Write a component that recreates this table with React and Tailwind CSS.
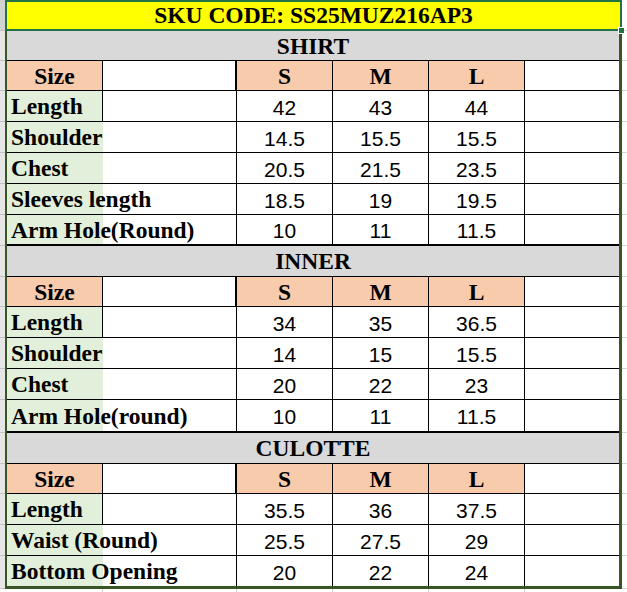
import React from "react";

const serif = "font-[family-name:Liberation_Serif,Times_New_Roman,serif] font-bold text-[23.5px] leading-none text-black";
const sans = "font-[family-name:Liberation_Sans,Arial,sans-serif] text-[21px] leading-none text-black";

const sections = [
  {
    title: "SHIRT",
    titleH: "h-[30px]",
    rows: [
      { label: "Length", vals: ["42", "43", "44"], line: true },
      { label: "Shoulder", vals: ["14.5", "15.5", "15.5"] },
      { label: "Chest", vals: ["20.5", "21.5", "23.5"] },
      { label: "Sleeves length", vals: ["18.5", "19", "19.5"] },
      { label: "Arm Hole(Round)", vals: ["10", "11", "11.5"], last: true },
    ],
  },
  {
    title: "INNER",
    titleH: "h-[31px]",
    rows: [
      { label: "Length", vals: ["34", "35", "36.5"], line: true },
      { label: "Shoulder", vals: ["14", "15", "15.5"] },
      { label: "Chest", vals: ["20", "22", "23"] },
      { label: "Arm Hole(round)", vals: ["10", "11", "11.5"], last: true, tall: true },
    ],
  },
  {
    title: "CULOTTE",
    titleH: "h-[31px]",
    rows: [
      { label: "Length", vals: ["35.5", "36", "37.5"], line: true },
      { label: "Waist (Round)", vals: ["25.5", "27.5", "29"] },
      { label: "Bottom Opening", vals: ["20", "22", "24"], end: true },
    ],
  },
];

// heights of every sheet row, for the row header strips at the sides
const stripRows = [
  "h-[31px]", "h-[30px]", "h-[30px]", "h-[31px]", "h-[31px]", "h-[31px]", "h-[31px]", "h-[31px]",
  "h-[31px]", "h-[30px]", "h-[31px]", "h-[31px]", "h-[31px]", "h-[33px]",
  "h-[31px]", "h-[30px]", "h-[31px]", "h-[31px]", "h-[33px]",
];

const SizeRow = () => (
  <div className="flex h-[30px] border-b border-black">
    <div className={`w-[96px] shrink-0 bg-[#f8cbad] border-r border-black flex items-center justify-center pt-[2px] ${serif}`}>
      Size
    </div>
    <div className="w-[134px] shrink-0 bg-white border-r-2 border-black" />
    {["S", "M", "L"].map((s) => (
      <div
        key={s}
        className={`w-[96px] shrink-0 bg-[#f8cbad] border-r border-black flex items-center justify-center pt-[2px] ${serif}`}
      >
        {s}
      </div>
    ))}
    <div className="w-[94px] shrink-0 bg-white" />
  </div>
);

const DataRow = ({ row }) => {
  let rowCls = "flex h-[31px] border-b border-black";
  if (row.last && row.tall) rowCls = "flex h-[33px] border-b-2 border-black";
  else if (row.last) rowCls = "flex h-[31px] border-b-2 border-black";
  else if (row.end) rowCls = "flex h-[30px]";
  return (
    <div className={rowCls}>
      <div
        className={`w-[96px] shrink-0 bg-[#e2efda] pl-[4px] pt-[2px] flex items-center whitespace-nowrap relative z-10 ${
          row.line ? "border-r border-black" : ""
        } ${serif}`}
      >
        {row.label}
      </div>
      <div className="w-[134px] shrink-0 bg-white border-r border-black" />
      {row.vals.map((v, i) => (
        <div
          key={i}
          className={`w-[96px] shrink-0 bg-white border-r border-black flex items-center justify-center pt-[2px] ${sans}`}
        >
          {v}
        </div>
      ))}
      <div className="w-[94px] shrink-0 bg-white" />
    </div>
  );
};

export default function App() {
  return (
    <div className="w-[627px] h-[592px] bg-white overflow-hidden flex">
      <div className="w-[5px] shrink-0 flex flex-col">
        {stripRows.map((h, i) => (
          <div
            key={i}
            className={`${h} shrink-0 border-b border-[#c4c4c4] ${i === 0 ? "bg-[#d2d2d2]" : "bg-[#e6e6e6]"}`}
          />
        ))}
      </div>

      <div className="w-[617px] shrink-0 flex flex-col">
        <div className="relative h-[31px] shrink-0 border-2 border-[#217346] bg-[#ffff00] flex items-center justify-center">
          <span className={`pt-[1px] ${serif}`}>SKU CODE: SS25MUZ216AP3</span>
          <div className="absolute -right-[5px] -bottom-[5px] w-[7px] h-[7px] bg-[#217346] border border-white z-20" />
        </div>
        <div className="border-l-2 border-r-[3px] border-b-[3px] border-[#375623] flex flex-col">
          {sections.map((sec) => (
            <div key={sec.title} className="flex flex-col">
              <div className={`${sec.titleH} shrink-0 bg-[#d9d9d9] border-b border-black flex items-center justify-center pt-[2px] ${serif}`}>
                {sec.title}
              </div>
              <SizeRow />
              {sec.rows.map((r) => (
                <DataRow key={r.label} row={r} />
              ))}
            </div>
          ))}
        </div>
        <div className="flex h-[4px]">
          <div className="w-[98px] border-r border-[#d4d4d4]" />
          <div className="w-[134px] border-r border-[#d4d4d4]" />
          <div className="w-[96px] border-r border-[#d4d4d4]" />
          <div className="w-[96px] border-r border-[#d4d4d4]" />
          <div className="w-[96px] border-r border-[#d4d4d4]" />
        </div>
      </div>

      <div className="w-[5px] shrink-0 flex flex-col">
        {stripRows.map((h, i) => (
          <div key={i} className={`${h} shrink-0 border-b border-[#d4d4d4] bg-white`} />
        ))}
      </div>
    </div>
  );
}
